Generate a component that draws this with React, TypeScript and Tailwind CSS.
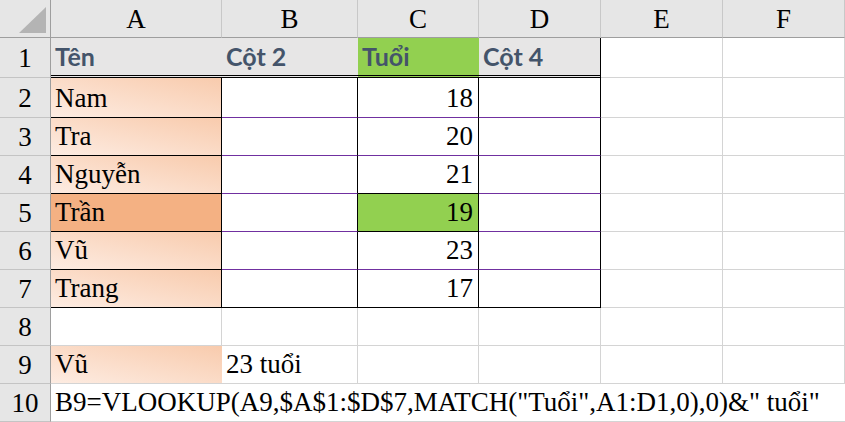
import React from "react";

const serif = "font-['Liberation_Serif','Times_New_Roman',serif]";
const calibri = "font-['Lato','Carlito','Calibri',sans-serif]";

const people = [
  { name: "Nam", age: 18 },
  { name: "Tra", age: 20 },
  { name: "Nguyễn", age: 21 },
  { name: "Trần", age: 19 },
  { name: "Vũ", age: 23 },
  { name: "Trang", age: 17 },
];

const peach = "bg-gradient-to-tr from-[#fdece2] to-[#f8cbad]";

function ColHead({ label }: { label: string }) {
  return (
    <div className="flex items-center justify-center border-r border-b border-r-[#c8c8c8] border-b-[#9e9e9e] bg-[#e6e6e6] pt-[2px] text-[27px] leading-none text-black">
      {label}
    </div>
  );
}

function RowHead({ n }: { n: number }) {
  return (
    <div className="flex items-center justify-center border-r border-b border-r-[#9e9e9e] border-b-[#c4c4c4] bg-[#e6e6e6] pt-[2px] text-[27px] leading-none text-black">
      {n}
    </div>
  );
}

function Cell({ className = "", children }: { className?: string; children?: React.ReactNode }) {
  return (
    <div className={"flex items-end overflow-visible whitespace-nowrap px-[4px] pb-[5px] text-[27px] leading-none text-black " + className}>
      {children}
    </div>
  );
}

export default function App() {
  return (
    <main className={"h-[422px] w-[845px] overflow-hidden bg-white " + serif}>
      <div className="grid grid-cols-[51px_171px_136px_121px_122px_122px_122px] grid-rows-[38px_40px_40px_repeat(8,38px)]">
        {/* corner */}
        <div className="relative border-r border-b border-r-[#9e9e9e] border-b-[#9e9e9e] bg-[#e6e6e6]">
          <svg className="absolute left-0 top-0" width="50" height="37" viewBox="0 0 50 37">
            <polygon points="46,7 46,33 19,33" fill="#b4b4b4" />
          </svg>
        </div>
        {["A", "B", "C", "D", "E", "F"].map((c) => (
          <ColHead key={c} label={c} />
        ))}

        {/* row 1: table header */}
        <RowHead n={1} />
        {["Tên", "Cột 2", "Tuổi", "Cột 4"].map((h, i) => (
          <div
            key={h}
            className={
              "flex items-end border-b-[3px] border-double border-b-black px-[4px] pb-[6px] text-[25px] font-bold leading-none text-[#44546a] " +
              calibri +
              (i === 2 ? " bg-[#92d050]" : " bg-[#e7e6e6]") +
              (i === 3 ? " border-r border-r-black" : "")
            }
          >
            {h}
          </div>
        ))}
        <Cell className="border-r border-b border-[#d4d4d4]" />
        <Cell className="border-r border-b border-[#d4d4d4]" />

        {/* rows 2-7 */}
        {people.map((p, i) => {
          const n = i + 2;
          const last = n === 7;
          const purple = last ? "border-b-black" : "border-b-[#7030a0]";
          const cBottom = n === 4 || n === 5 || last ? "border-b-black" : "border-b-[#7030a0]";
          return (
            <React.Fragment key={p.name}>
              <RowHead n={n} />
              <Cell className={"border-r border-b border-r-black border-b-black " + (n === 5 ? "bg-[#f4b183]" : peach)}>
                {p.name}
              </Cell>
              <Cell className={"border-r border-b border-r-black " + purple} />
              <Cell className={"justify-end pr-[5px] border-r border-b border-r-black " + cBottom + (n === 5 ? " bg-[#92d050]" : "")}>
                {p.age}
              </Cell>
              <Cell className={"border-r border-b border-r-black " + purple} />
              <Cell className="border-r border-b border-[#d4d4d4]" />
              <Cell className="border-r border-b border-[#d4d4d4]" />
            </React.Fragment>
          );
        })}

        {/* row 8 */}
        <RowHead n={8} />
        {[0, 1, 2, 3, 4, 5].map((k) => (
          <Cell key={k} className="border-r border-b border-[#d4d4d4]" />
        ))}

        {/* row 9 */}
        <RowHead n={9} />
        <Cell className={"border-b border-b-[#d4d4d4] " + peach}>Vũ</Cell>
        <Cell className="border-r border-b border-[#d4d4d4]">23 tuổi</Cell>
        {[0, 1, 2, 3].map((k) => (
          <Cell key={k} className="border-r border-b border-[#d4d4d4]" />
        ))}

        {/* row 10 */}
        <RowHead n={10} />
        <Cell className="col-span-6 border-b border-[#d4d4d4]">
          B9=VLOOKUP(A9,$A$1:$D$7,MATCH("Tuổi",A1:D1,0),0)&amp;" tuổi"
        </Cell>
      </div>
    </main>
  );
}
